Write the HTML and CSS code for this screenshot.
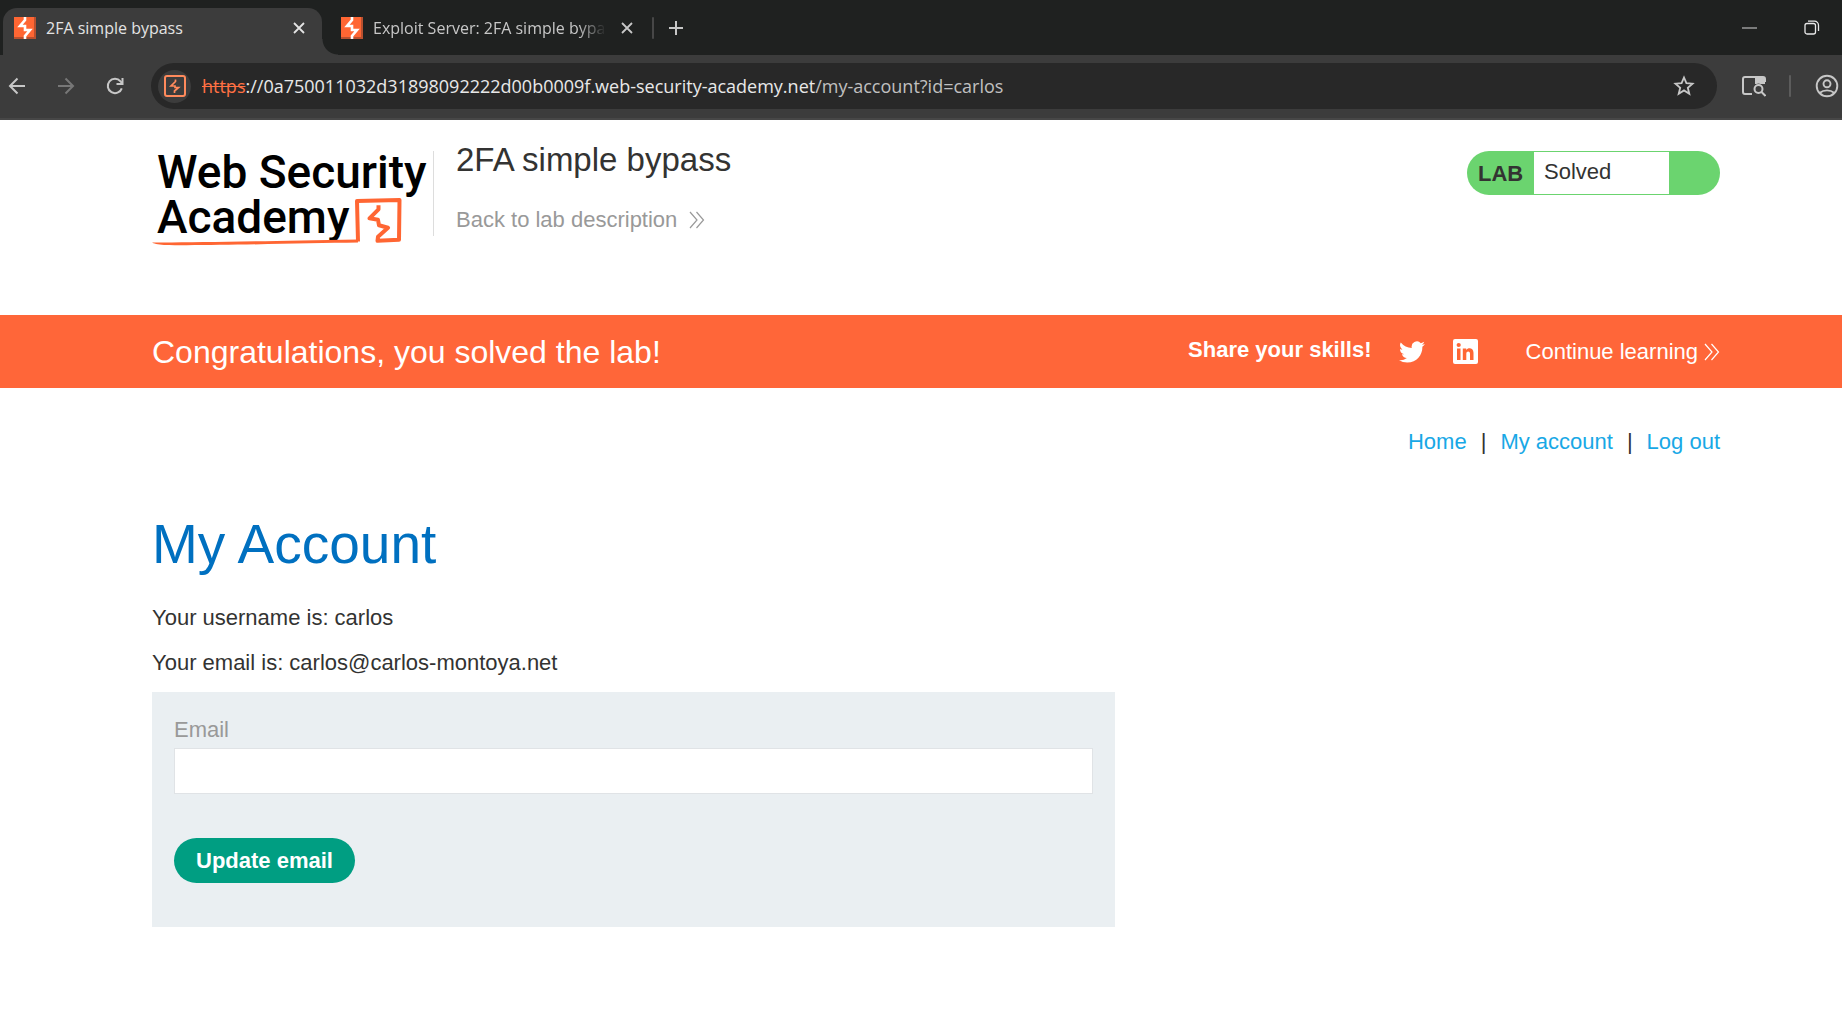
FILE: index.html
```html
<!DOCTYPE html>
<html lang="en">
<head>
<meta charset="utf-8">
<title>2FA simple bypass</title>
<link rel="stylesheet" href="styles.css">
</head>
<body>
<svg class="defs" aria-hidden="true">
  <symbol id="favicon" viewBox="0 0 22 22">
    <path fill="#ff6633" d="M0 0h22v22H0z"/>
    <path fill="#b9502f" d="M20 0h2v22H0v-2h20z"/>
    <path fill="none" stroke="#fff" stroke-width="2.6" d="M11 0v3L6 9h5v4h5l-5 6v3"/>
  </symbol>
  <symbol id="close" viewBox="0 0 12 12">
    <path fill="none" stroke="currentColor" stroke-width="1.8" d="M1 1l10 10M11 1L1 11"/>
  </symbol>
  <symbol id="chevrons" viewBox="0 0 16 18">
    <path fill="none" stroke="currentColor" stroke-width="1.2" d="M1 1l7 8-7 8M7.500 1l7 8-7 8"/>
  </symbol>
</svg>

<div class="browser">
  <div class="tabs">
    <div class="tab tab-active">
      <svg class="favicon"><use href="#favicon"/></svg>
      <span class="tab-title">2FA simple bypass</span>
      <button class="tab-close" aria-label="Close tab"><svg class="x"><use href="#close"/></svg></button>
    </div>
    <div class="tab tab-idle">
      <svg class="favicon"><use href="#favicon"/></svg>
      <span class="tab-title fade">Exploit Server: 2FA simple bypass</span>
      <button class="tab-close" aria-label="Close tab"><svg class="x"><use href="#close"/></svg></button>
    </div>
    <span class="tab-divider"></span>
    <button class="new-tab" aria-label="New tab"><svg width="14" height="14" viewBox="0 0 14 14"><path stroke="currentColor" stroke-width="2" d="M7 0v14M0 7h14"/></svg></button>
    <div class="window-controls">
      <button aria-label="Minimize"><svg width="16" height="16" viewBox="0 0 16 16"><path stroke="#9a9a9a" stroke-width="1.500" d="M0 8h15"/></svg></button>
      <button aria-label="Restore"><svg width="16" height="16" viewBox="0 0 16 16" fill="none" stroke="#e8e8e8" stroke-width="1.300"><rect x="1" y="3.500" width="10.500" height="10.500" rx="2"/><path d="M4 1.200h6.500a4 4 0 0 1 4 4V11"/></svg></button>
    </div>
  </div>
  <div class="toolbar">
    <div class="nav-buttons">
      <button aria-label="Back"><svg width="18" height="18" viewBox="0 0 18 18" fill="none" stroke="currentColor" stroke-width="2"><path d="M17 9H2M9.500 1.500L2 9l7.500 7.500"/></svg></button>
      <button class="dim" aria-label="Forward"><svg width="18" height="18" viewBox="0 0 18 18" fill="none" stroke="currentColor" stroke-width="2"><path d="M1 9h15M8.500 1.500L16 9l-7.500 7.500"/></svg></button>
      <button aria-label="Reload"><svg width="18" height="18" viewBox="0 0 18 18" fill="none" stroke="currentColor" stroke-width="2"><path d="M15.800 11.300A7.200 7.200 0 1 1 14.500 4.300L16 6"/><path d="M16.500 1v6h-6"/></svg></button>
    </div>
    <div class="omnibox">
      <button class="site-info" aria-label="Site information"><svg width="22" height="22" viewBox="0 0 22 22" fill="none" stroke="#ff8a5c" stroke-width="2"><rect x="1" y="1" width="20" height="20" rx="2"/><path stroke-width="1.700" d="M11.500 4.500v2L7 11h4v1.500h3.500L10.500 16v2"/></svg></button>
      <div class="url"><s>https</s>://0a750011032d31898092222d00b0009f.web-security-academy.net<span class="url-path">/my-account?id=carlos</span></div>
      <button class="star" aria-label="Bookmark this tab"><svg width="22" height="22" viewBox="0 0 22 22" fill="none" stroke="currentColor" stroke-width="1.800"><path d="M11 2.500l2.400 5.700 6.100.5-4.700 4 1.500 6-5.300-3.300-5.300 3.300 1.500-6-4.700-4 6.100-.5z"/></svg></button>
    </div>
    <button class="side-search" aria-label="Search tabs"><svg width="24" height="22" viewBox="0 0 24 22" fill="none" stroke="currentColor" stroke-width="2"><path d="M10 19H3a2 2 0 0 1-2-2V4a2 2 0 0 1 2-2h18a2 2 0 0 1 2 2v3"/><path fill="currentColor" stroke="none" d="M13 2h8a2 2 0 0 1 2 2v5H13z"/><circle cx="16.500" cy="14" r="5.500" fill="#3c3c3c" stroke="none"/><circle cx="16.500" cy="14" r="4"/><path d="M19.500 17l4 4"/></svg></button>
    <span class="toolbar-divider"></span>
    <button class="profile" aria-label="Profile"><svg width="24" height="24" viewBox="0 0 24 24" fill="none" stroke="currentColor" stroke-width="1.900"><circle cx="12" cy="12" r="10.300"/><circle cx="12" cy="9.800" r="3.500"/><path d="M4.500 19c4.500-3.500 10.500-3.500 15 0"/></svg></button>
  </div>
</div>

<header class="lab-header">
  <a class="logo" href="#" aria-label="Web Security Academy">
    <span class="logo-text">Web Security<br>Academy</span>
    <svg class="logo-mark" width="252" height="48" viewBox="0 0 252 48" fill="none" stroke="#ff6633">
      <path fill="#ff6633" stroke="none" d="M0 44.500c40 .3 100-1.200 206-3v3C150 45 60 48 12 47 6 46.500 1 45.500 0 44.500z"/>
      <path stroke-width="4" stroke-linejoin="round" d="M206 43.500l-1-40.500 42.500-1-.5 39.800-21.500 1 .5-4 10-9-9-2.500-1-5.500-8.500-1.500 9-9v-4"/>
    </svg>
  </a>
  <div class="title-block">
    <h2>2FA simple bypass</h2>
    <a class="back" href="#">Back to lab description <svg class="chev"><use href="#chevrons"/></svg></a>
  </div>
  <div class="lab-status"><span class="lab-label">LAB</span><span class="lab-value">Solved</span></div>
</header>

<section class="banner">
  <p class="congrats">Congratulations, you solved the lab!</p>
  <div class="share">
    <span class="share-title">Share your skills!</span>
    <a href="#" aria-label="Share on Twitter"><svg width="26" height="26" viewBox="0 0 24 24" fill="#fff"><path d="M23.950 4.570a10 10 0 0 1-2.820.780 4.960 4.960 0 0 0 2.160-2.730 9.900 9.900 0 0 1-3.120 1.190 4.920 4.920 0 0 0-8.380 4.480A13.930 13.930 0 0 1 1.640 3.160a4.920 4.920 0 0 0 1.520 6.570 4.900 4.900 0 0 1-2.230-.610v.060a4.920 4.920 0 0 0 3.950 4.830 5 5 0 0 1-2.210.080 4.940 4.940 0 0 0 4.600 3.420A9.870 9.870 0 0 1 0 19.540a13.990 13.990 0 0 0 7.560 2.210c9.050 0 14-7.500 14-13.980 0-.210 0-.420-.020-.630a9.940 9.940 0 0 0 2.410-2.570z"/></svg></a>
    <a href="#" aria-label="Share on LinkedIn"><svg width="26" height="26" viewBox="0 0 26 26"><rect x="1" width="25" height="25" rx="2" fill="#fff"/><path fill="#ff6633" d="M5 9.500h3.500V21H5zM10.800 9.500h3.400v1.600c1.700-2.800 7.300-2.500 7.300 2.700V21H18v-6.300c0-3-3.700-2.800-3.700 0V21h-3.500z"/><circle cx="6.700" cy="6" r="2.100" fill="#ff6633"/></svg></a>
  </div>
  <a class="continue" href="#">Continue learning <svg class="chev"><use href="#chevrons"/></svg></a>
</section>

<main class="content">
  <nav class="account-nav"><a href="#">Home</a><span>|</span><a href="#">My account</a><span>|</span><a href="#">Log out</a></nav>
  <h1>My Account</h1>
  <div class="details">
    <p>Your username is: carlos</p>
    <p>Your email is: carlos@carlos-montoya.net</p>
  </div>
  <form class="email-form">
    <label for="email">Email</label>
    <input id="email" type="email">
    <button type="button">Update email</button>
  </form>
</main>
</body>
</html>
```

FILE: styles.css
```css
* { box-sizing: border-box; }
body {
  margin: 0;
  background: #fff;
  color: #333332;
  font: 22px/28px "Liberation Sans", Arial, sans-serif;
}
h1, h2, p { margin: 0; font-weight: 400; }
a { color: inherit; text-decoration: none; }
button {
  border: 0;
  padding: 0;
  background: none;
  color: inherit;
  font: inherit;
}
svg { display: block; flex: none; }
.defs { position: absolute; width: 0; height: 0; }

/* Browser frame */
.browser {
  background: #3c3c3c;
  border-bottom: 2px solid #474747;
  color: #c7c7c7;
  font: 16px/22px "Open Sans", "Noto Sans", sans-serif;
}
.browser button { display: flex; align-items: center; justify-content: center; }
.tabs {
  display: flex;
  align-items: center;
  height: 55px;
  background: #1f2120;
}
.tab { display: flex; align-items: center; gap: 10px; }
.tab-active {
  align-self: flex-end;
  width: 319px;
  height: 47px;
  margin-left: 3px;
  padding: 0 17px 8px 11px;
  border-radius: 14px 14px 0 0;
  background: #3c3c3c;
  color: #e3e3e3;
}
.tab-idle {
  align-self: stretch;
  width: 330px;
  padding: 0 19px 0 19px;
  background: radial-gradient(circle at 16px 39px, #1f2120 16px, #3c3c3c 17px) 0 100% / 16px 16px no-repeat;
  background: radial-gradient(circle at 100% 0, #1f2120 15px, #3c3c3c 16px) 0 100% / 16px 16px no-repeat;
}
.favicon { width: 22px; height: 22px; }
.tab-title { flex: 1; overflow: hidden; white-space: nowrap; }
.fade { mask-image: linear-gradient(to right, #000 86%, transparent 98%); }
.x { width: 12px; height: 12px; }
.tab-divider, .toolbar-divider {
  width: 2px;
  height: 22px;
  border-radius: 2px;
  background: #474747;
}
.new-tab { margin-left: 15px; }
.window-controls { display: flex; gap: 46px; margin: 0 22px 0 auto; }
.toolbar {
  display: flex;
  align-items: center;
  padding: 8px 3px 9px 8px;
}
.nav-buttons { display: flex; gap: 31px; margin-right: 27px; }
.dim { color: #777; }
.omnibox {
  display: flex;
  flex: 1;
  align-items: center;
  height: 46px;
  padding: 0 22px 0 7px;
  border-radius: 23px;
  background: #282828;
  font-size: 18px;
}
.site-info {
  width: 33px;
  height: 33px;
  margin-right: 11px;
  border-radius: 50%;
  background: #3c3c3c;
}
.url { flex: 1; color: #e8e8e8; white-space: nowrap; }
.url s { color: #ff7043; }
.url-path { color: #c0c0c0; }
.side-search { margin-left: 25px; }
.toolbar-divider { margin: 0 24px 0 23px; background: #5c5c5c; }

/* Lab header */
.lab-header {
  display: flex;
  align-items: flex-start;
  padding: 21px 122px 69px 152px;
}
.logo {
  display: grid;
  width: 282px;
  height: 105px;
  color: #000;
}
.logo-text {
  grid-area: 1 / 1;
  padding: 9px 0 0 5px;
  font: 500 46px/45px Roboto, "Liberation Sans", sans-serif;
  white-space: nowrap;
}
.logo-mark { grid-area: 1 / 1; align-self: end; }
.title-block {
  position: relative;
  flex: 1;
  padding-left: 22px;
}
.title-block::before {
  content: "";
  position: absolute;
  left: -1px;
  top: 10px;
  height: 85px;
  border-left: 1px solid #ddd;
}
h2 { font-size: 33px; line-height: 38px; }
.back, .continue { display: flex; align-items: center; }
.back { gap: 12px; margin-top: 27px; color: #999; }
.chev { width: 16px; height: 18px; }
.lab-status {
  display: flex;
  width: 253px;
  height: 44px;
  margin-top: 10px;
  padding: 1px 51px 1px 11px;
  border-radius: 22px;
  background: #6bd46f;
}
.lab-label { width: 56px; font-weight: 700; line-height: 43px; }
.lab-value {
  flex: 1;
  padding-left: 10px;
  background: #fff;
  line-height: 40px;
}

/* Solved banner */
.banner {
  display: flex;
  align-items: center;
  padding: 16px 122px 15px 152px;
  background: #ff6639;
  color: #fff;
}
.congrats { flex: 1; font-size: 32px; line-height: 42px; }
.share { display: flex; align-items: center; gap: 27px; }
.share-title { padding-bottom: 4px; font-weight: 700; }
.continue { gap: 6px; margin-left: 48px; }

/* Account page */
.content { padding: 40px 122px 99px 152px; }
.account-nav { display: flex; justify-content: flex-end; gap: 14px; }
.account-nav a { color: #18a8e6; }
h1 {
  margin: 54px 0 26px;
  color: #0070c0;
  font-size: 55px;
  line-height: 68px;
}
.details { display: grid; gap: 17px; margin-bottom: 15px; }
.email-form {
  display: flex;
  flex-direction: column;
  align-items: flex-start;
  width: 963px;
  max-width: 100%;
  padding: 24px 22px 44px;
  background: #eaeff2;
}
.email-form label { margin-bottom: 4px; color: #999; }
.email-form input {
  width: 100%;
  height: 46px;
  padding: 0 10px;
  border: 1px solid #e0e3e6;
  background: #fff;
  font: inherit;
}
.email-form button {
  height: 45px;
  margin-top: 44px;
  padding: 0 22px;
  border-radius: 23px;
  background: #009e82;
  color: #fff;
  font-weight: 700;
}
```
